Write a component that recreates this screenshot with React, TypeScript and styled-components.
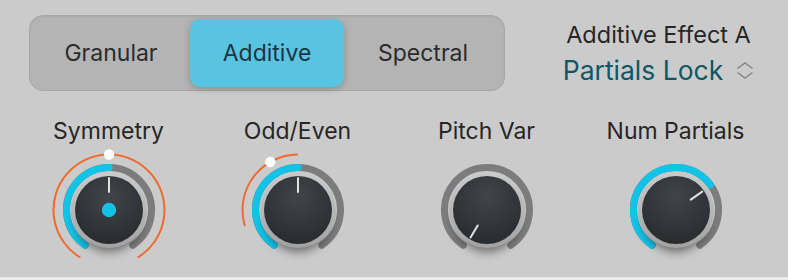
import React from "react";
import styled, { createGlobalStyle } from "styled-components";

const GlobalStyle = createGlobalStyle`
  html, body { margin: 0; padding: 0; background: #cbcbcb; }
  body { font-family: Inter, "Liberation Sans", sans-serif; }
`;

const Panel = styled.div`
  width: 788px;
  height: 280px;
  box-sizing: border-box;
  padding-top: 15px;
  background: #cbcbcb;
  border-bottom: 3px solid #ebebeb;
  display: flex;
  flex-direction: column;
  overflow: hidden;
`;

const TopRow = styled.div`
  display: flex;
  align-items: flex-start;
  padding-left: 29px;
  height: 76px;
`;

const Segmented = styled.div`
  width: 476px;
  height: 76px;
  box-sizing: border-box;
  padding: 3px;
  border: 1px solid #a6a6a6;
  border-radius: 14px;
  background: #b4b4b4;
  box-shadow: inset 0 1px 2px rgba(0, 0, 0, 0.06);
  display: flex;
`;

const SegButton = styled.div<{ $active?: boolean }>`
  flex: 1;
  margin: 0 1px;
  border-radius: 10px;
  display: flex;
  align-items: center;
  justify-content: center;
  font-size: 23px;
  color: ${(p) => (p.$active ? "#1d3540" : "#2b2b2b")};
  background: ${(p) => (p.$active ? "#59c4e2" : "transparent")};
  box-shadow: ${(p) => (p.$active ? "0 2px 7px rgba(0,0,0,0.22)" : "none")};
`;

const EffectBox = styled.div`
  flex: 1;
  display: flex;
  flex-direction: column;
  align-items: center;
  padding-top: 6px;
  margin-left: 28px;
  margin-right: 4px;
`;

const EffectTitle = styled.div`
  font-size: 23.5px;
  line-height: 28px;
  color: #262626;
`;

const EffectValue = styled.div`
  display: flex;
  align-items: center;
  gap: 13px;
  margin-top: 5px;
  font-size: 26.5px;
  line-height: 32px;
  color: #0f5764;
`;

const KnobRow = styled.div`
  display: grid;
  grid-template-columns: repeat(4, 189px);
  padding-left: 14px;
  margin-top: 26px;
`;

const KnobUnit = styled.div`
  display: flex;
  flex-direction: column;
  align-items: center;
`;

const KnobLabel = styled.div`
  font-size: 23px;
  line-height: 28px;
  color: #262626;
  white-space: nowrap;
`;

const KnobSvg = styled.svg`
  display: block;
  overflow: visible;
`;

const C = 65;
const pt = (r: number, a: number) => {
  const rad = (a * Math.PI) / 180;
  return [C + r * Math.sin(rad), C - r * Math.cos(rad)];
};
const arc = (r: number, a1: number, a2: number) => {
  const [x1, y1] = pt(r, a1);
  const [x2, y2] = pt(r, a2);
  const large = a2 - a1 > 180 ? 1 : 0;
  return `M ${x1.toFixed(2)} ${y1.toFixed(2)} A ${r} ${r} 0 ${large} 1 ${x2.toFixed(2)} ${y2.toFixed(2)}`;
};

type KnobProps = {
  id: string;
  value?: number | null;
  pointer: number;
  pointerFrom?: number;
  centerDot?: boolean;
  mod?: [number, number];
  modDot?: number;
};

const START = -146;
const END = 146;

const Knob: React.FC<KnobProps> = ({ id, value, pointer, pointerFrom = 18, centerDot, mod, modDot }) => {
  const [px1, py1] = pt(pointerFrom, pointer);
  const [px2, py2] = pt(32, pointer);
  const dot = modDot !== undefined ? pt(55.5, modDot) : null;
  return (
    <KnobSvg width={130} height={130} viewBox="0 0 130 130">
      <defs>
        <radialGradient id={`body-${id}`} cx="50%" cy="30%" r="75%">
          <stop offset="0%" stopColor="#41454a" />
          <stop offset="100%" stopColor="#272a2d" />
        </radialGradient>
        <linearGradient id={`bezel-${id}`} x1="0" y1="0" x2="0" y2="1">
          <stop offset="0%" stopColor="#cbcbcb" />
          <stop offset="100%" stopColor="#a2a2a2" />
        </linearGradient>
        <filter id={`sh-${id}`} x="-50%" y="-50%" width="200%" height="200%">
          <feGaussianBlur stdDeviation="5" />
        </filter>
      </defs>
      {mod && (
        <path d={arc(55.5, mod[0], mod[1])} fill="none" stroke="#ef6a2c" strokeWidth={2} strokeLinecap="round" />
      )}
      <path d={arc(42.5, START, END)} fill="none" stroke="#7c7c7c" strokeWidth={7} strokeLinecap="round" />
      {value !== null && value !== undefined && (
        <path d={arc(42.5, START, value)} fill="none" stroke="#12c3e7" strokeWidth={7} strokeLinecap="round" />
      )}
      <circle cx={C} cy={C + 9} r={33} fill="rgba(0,0,0,0.45)" filter={`url(#sh-${id})`} />
      <circle cx={C} cy={C} r={38} fill={`url(#bezel-${id})`} />
      <circle cx={C} cy={C} r={34} fill={`url(#body-${id})`} />
      <line x1={px1} y1={py1} x2={px2} y2={py2} stroke="#e2e2e2" strokeWidth={2} strokeLinecap="round" />
      {centerDot && <circle cx={C} cy={C} r={7.2} fill="#12c3e7" />}
      {dot && <circle cx={dot[0]} cy={dot[1]} r={5.2} fill="#ffffff" />}
    </KnobSvg>
  );
};

const Chevrons = () => (
  <svg width="18" height="17" viewBox="0 0 18 17">
    <path d="M1.5 6.5 L9 1 L16.5 6.5" fill="none" stroke="#858585" strokeWidth="1.5" />
    <path d="M1.5 10.5 L9 16 L16.5 10.5" fill="none" stroke="#858585" strokeWidth="1.5" />
  </svg>
);

export default function App() {
  return (
    <>
      <GlobalStyle />
      <Panel>
        <TopRow>
          <Segmented>
            <SegButton>Granular</SegButton>
            <SegButton $active>Additive</SegButton>
            <SegButton>Spectral</SegButton>
          </Segmented>
          <EffectBox>
            <EffectTitle>Additive Effect A</EffectTitle>
            <EffectValue>
              <span>Partials Lock</span>
              <Chevrons />
            </EffectValue>
          </EffectBox>
        </TopRow>
        <KnobRow>
          <KnobUnit>
            <KnobLabel>Symmetry</KnobLabel>
            <Knob id="sym" value={0} pointer={0} centerDot mod={[-148, 148]} modDot={0} />
          </KnobUnit>
          <KnobUnit>
            <KnobLabel>Odd/Even</KnobLabel>
            <Knob id="odd" value={0} pointer={0} mod={[-106, -1]} modDot={-30} />
          </KnobUnit>
          <KnobUnit>
            <KnobLabel>Pitch Var</KnobLabel>
            <Knob id="pitch" value={null} pointer={-149} />
          </KnobUnit>
          <KnobUnit>
            <KnobLabel>Num Partials</KnobLabel>
            <Knob id="num" value={54} pointer={55} />
          </KnobUnit>
        </KnobRow>
      </Panel>
    </>
  );
}
